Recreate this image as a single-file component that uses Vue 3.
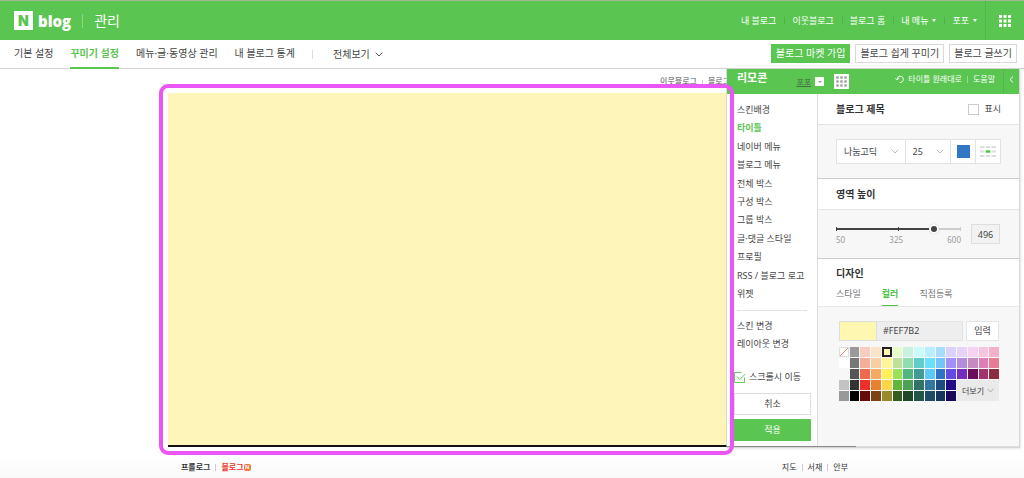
<script setup>
import { ref, computed } from 'vue'

const userLinks = [
  { label: '내 블로그' },
  { label: '이웃블로그' },
  { label: '블로그 홈' },
  { label: '내 메뉴', menu: true },
  { label: '포포', menu: true },
]
const tabs = ['기본 설정', '꾸미기 설정', '메뉴·글·동영상 관리', '내 블로그 통계']
const activeTab = '꾸미기 설정'
const sections = [
  '스킨배경', '타이틀', '네이버 메뉴', '블로그 메뉴', '전체 박스', '구성 박스',
  '그룹 박스', '글·댓글 스타일', '프로필', 'RSS / 블로그 로고', '위젯',
]
const designTabs = ['스타일', '컬러', '직접등록']
const palette = [
  'none', '#999999', '#f8cdc0', '#fae3c9', '#fef7b2', '#e6fccb', '#c9f1dd', '#c8fbfa', '#b8eefd', '#a8dcfc', '#dad2fa', '#e7d3fa', '#f7d2f2', '#f7c4e0', '#f5b1cb',
  '#ffffff', '#777777', '#f4ae99', '#f8cfa3', '#fef49a', '#bfe09a', '#90deb0', '#5fcdc9', '#6adffc', '#74c4fc', '#a28ff8', '#b48cdc', '#c48bc0', '#dd7eb6', '#e67b94',
  '#f7f7f7', '#555555', '#f06850', '#f4aa5f', '#fef05a', '#9ae256', '#51b57e', '#439a92', '#5bc9fc', '#2f72c6', '#6349e0', '#772cc0', '#6a0d5f', '#a2336f', '#8f2c40',
  '#c2c2c2', '#333333', '#ee302a', '#e8812e', '#fad648', '#5fb839', '#4aa157', '#2f7466', '#3277a2', '#1d4c80', '#200a87',
  '#999999', '#000000', '#650b09', '#7e4212', '#988a2a', '#325c20', '#1d4a26', '#22544a', '#1d4b68', '#15375d', '#1a0858',
]

const color = ref('#FEF7B2')
const areaHeight = ref(496)
const showTitle = ref(false)
const followScroll = ref(true)
const fillPercent = computed(() => ((areaHeight.value - 50) / 550) * 100 + '%')
function pick(c) {
  if (c !== 'none') color.value = c.toUpperCase()
}
</script>

<template>
  <div class="page">
    <header class="top">
      <a href="#" class="logo"><span class="mark">N</span><span class="word">blog</span></a>
      <span class="admin">관리</span>
      <nav class="user">
        <a v-for="l in userLinks" :key="l.label" href="#">{{ l.label }}<i v-if="l.menu" class="caret"></i></a>
      </nav>
      <button class="apps" aria-label="전체 서비스">
        <svg width="12" height="12" viewBox="0 0 12 12" fill="#fff">
          <template v-for="r in 3" :key="r">
            <rect v-for="c in 3" :key="c" :x="(c - 1) * 4.5" :y="(r - 1) * 4.5" width="3" height="3" />
          </template>
        </svg>
      </button>
    </header>

    <div class="bar">
      <nav class="tabs">
        <a v-for="t in tabs" :key="t" href="#" :class="{ on: t === activeTab }">{{ t }}</a>
      </nav>
      <button class="all">전체보기
        <svg width="8" height="5" viewBox="0 0 8 5" fill="none" stroke="#555"><path d="M.7.7 4 4 7.3.7" /></svg>
      </button>
      <div class="actions">
        <button class="primary">블로그 마켓 가입</button>
        <button>블로그 쉽게 꾸미기</button>
        <button>블로그 글쓰기</button>
      </div>
    </div>

    <main class="stage">
      <div class="blog">
        <div class="links"><a href="#">이웃블로그</a><a href="#">블로그</a></div>
        <div class="title-area"></div>
        <div class="menu">
          <div class="group bold"><a href="#">프롤로그</a><a href="#" class="red">블로그<span class="new">N</span></a></div>
          <div class="group"><a href="#">지도</a><a href="#">서재</a><a href="#">안부</a></div>
        </div>
        <div class="highlight"></div>
      </div>

      <aside class="remote">
        <div class="remote-head">
          <h2>리모콘</h2>
          <a href="#" class="owner">포포</a>
          <button class="drop" aria-label="블로그 선택"><i class="caret"></i></button>
          <button class="dots" aria-label="격자 보기">
            <svg width="11" height="11" viewBox="0 0 11 11" fill="#9aa09a">
              <template v-for="r in 3" :key="r">
                <rect v-for="c in 3" :key="c" :x="(c - 1) * 4 + 0.3" :y="(r - 1) * 4 + 0.3" width="2.4" height="2.4" />
              </template>
            </svg>
          </button>
          <a href="#" class="reset">
            <svg width="9" height="9" viewBox="0 0 9 9" fill="none" stroke="#fff"><path d="M.5 3.2 2.2 5 4 3.2M2.2 4.8C2.2 2.5 3.4 1.2 5.1 1.2 7 1.2 8.3 2.5 8.3 4.3 8.3 6.2 7 7.5 4.8 7.5" /></svg>
            타이틀 원래대로</a>
          <a href="#" class="help">도움말</a>
          <button class="fold" aria-label="접기">
            <svg width="5" height="7" viewBox="0 0 5 7" fill="none" stroke="#fff"><path d="M4 .6 1 3.5 4 6.4" /></svg>
          </button>
        </div>

        <div class="remote-body">
          <div class="side">
            <ul class="sections">
              <li v-for="s in sections" :key="s"><a href="#" :class="{ on: s === '타이틀' }">{{ s }}</a></li>
            </ul>
            <ul class="changes">
              <li><a href="#">스킨 변경</a></li>
              <li><a href="#">레이아웃 변경</a></li>
            </ul>
            <label class="follow"><input v-model="followScroll" type="checkbox" />
              <svg width="12" height="11" viewBox="0 0 12 11" fill="none" stroke="#62cc58"><path d="M10.5 5.5v5H.5V.5h7" /><path v-if="followScroll" d="M3 4.5 5.8 7.5 11.4 1.8" /></svg>
              스크롤시 이동</label>
            <button class="cancel">취소</button>
            <button class="apply">적용</button>
          </div>

          <div class="props">
            <div class="row">
              <h3>블로그 제목</h3>
              <label class="show"><input v-model="showTitle" type="checkbox" />표시</label>
            </div>
            <div class="box font-box">
              <div class="fonts">
                <select aria-label="글꼴" class="face"><option>나눔고딕</option></select>
                <select aria-label="글자 크기" class="size"><option>25</option></select>
                <button aria-label="글자 색"><span class="chip"></span></button>
                <button aria-label="정렬">
                  <svg width="16" height="11" viewBox="0 0 16 11">
                    <path fill="#ddd" d="M0 0h4.500v2H0zM5.700 0h4.600v2H5.700zM11.500 0H16v2h-4.500zM0 4.500h4.500v2H0zM11.500 4.500H16v2h-4.500zM0 9h4.500v2H0zM5.700 9h4.600v2H5.700zM11.500 9H16v2h-4.500z" />
                    <path fill="#4dc242" d="M5.700 4.300h4.600v2.400H5.700z" />
                  </svg>
                </button>
              </div>
            </div>

            <div class="row"><h3>영역 높이</h3></div>
            <div class="box height-box">
              <div class="slider">
                <div class="track">
                  <i class="fill" :style="{ width: fillPercent }"></i>
                  <span class="ticks"><i></i><i></i><i></i></span>
                  <input v-model.number="areaHeight" type="range" min="50" max="600" aria-label="영역 높이" />
                </div>
                <div class="scale"><span>50</span><span>325</span><span>600</span></div>
              </div>
              <input v-model.number="areaHeight" class="value" aria-label="높이 값" />
            </div>

            <div class="design">
              <h3>디자인</h3>
              <div class="design-tabs">
                <button v-for="t in designTabs" :key="t" :class="{ on: t === '컬러' }">{{ t }}</button>
              </div>
            </div>
            <div class="box color-box">
              <div class="entry">
                <span class="swatch" :style="{ background: color }"></span>
                <input v-model="color" aria-label="색상 코드" />
                <button>입력</button>
              </div>
              <div class="palette">
                <button
                  v-for="(c, i) in palette"
                  :key="i"
                  :aria-label="c"
                  :class="{ picked: c.toUpperCase() === color, first: i === 56 }"
                  :style="{ backgroundColor: c === 'none' ? '#fff' : c }"
                  @click="pick(c)"
                >
                  <svg v-if="c === 'none'" width="10" height="10" viewBox="0 0 10 10" fill="none"><path stroke="#ddd" d="M.5.5h9v9h-9z" /><path stroke="#f07c78" d="M1 9 9 1" /></svg>
                </button>
                <button class="more">더보기
                  <svg width="7" height="5" viewBox="0 0 7 5" fill="none" stroke="#aaa"><path d="M.5.700 3.500 4 6.500.700" /></svg>
                </button>
              </div>
            </div>
          </div>
        </div>
      </aside>
    </main>
  </div>
</template>

<style>
body { margin: 0; }
</style>

<style scoped>
.page {
  --green: #5ac551;
  min-height: 100vh;
  display: flex;
  flex-direction: column;
  overflow: hidden;
  font: 9px/14px "Noto Sans", "Noto Sans CJK KR", sans-serif;
  color: #444;
  background: #fff;
}
.page * { box-sizing: border-box; }
a { color: inherit; text-decoration: none; white-space: nowrap; }
button, input, select { font: inherit; color: inherit; margin: 0; padding: 0; border: 0; border-radius: 0; background: none; }
button { white-space: nowrap; cursor: pointer; }
h2, h3, ul { margin: 0; padding: 0; list-style: none; }
svg { display: block; flex: none; }
.caret { display: inline-block; border: 3px solid transparent; border-top-color: currentColor; border-bottom: 0; }

.top { display: flex; align-items: center; height: 40px; padding-left: 14px; background: var(--green); border-top: 1px solid #a3b697; color: #fff; }
.logo { display: flex; align-items: center; gap: 5px; }
.mark { width: 19px; height: 19px; background: #fff; color: var(--green); font: 900 14px/19px Inter, sans-serif; text-align: center; }
.word { font: 800 15px/20px "Open Sans", sans-serif; }
.admin { margin-left: 11px; padding-left: 11px; border-left: 1px solid #8dd886; font-size: 14px; line-height: 14px; }
.user { display: flex; margin-left: auto; }
.user a { display: flex; align-items: center; gap: 4px; padding: 0 8px; }
.user .caret { border-width: 2px; border-top-width: 3px; border-bottom: 0; }
.user a + a { background: linear-gradient(#4cb344, #4cb344) 0 50% / 1px 7px no-repeat; }
.apps { display: flex; align-items: center; justify-content: center; width: 39px; height: 39px; border-left: 1px solid #4fb747; }

.bar { display: flex; align-items: center; height: 29px; padding: 0 7px 0 14px; border-bottom: 1px solid #d4d4d4; font-size: 10px; color: #444; }
.tabs { display: flex; align-self: stretch; gap: 17px; }
.tabs a { line-height: 27px; height: 29px; }
.tabs .on { color: var(--green); font-weight: 700; border-bottom: 2px solid var(--green); }
.all { display: flex; align-items: center; gap: 5px; margin-left: 17px; padding-left: 20px; line-height: 9px; border-left: 1px solid #ddd; }
.actions { display: flex; gap: 5px; margin: 0 0 2px auto; }
.actions button { height: 19px; padding: 0 4px; border: 1px solid #d9d9d9; line-height: 17px; }
.actions .primary { background: var(--green); border-color: var(--green); color: #fff; }

.stage { position: relative; flex: 1; background: linear-gradient(#fff 95%, #f9f9f9); }
.blog { position: relative; max-width: 688px; margin: 0 auto; font-size: 8px; }
.links { display: flex; justify-content: flex-end; height: 24px; padding: 5px 126px 0 0; color: #555; }
.title-area { height: 354px; background: #fdf5ba; border-bottom: 2px solid #111; }
.links a + a, .group a + a { margin-left: 5px; padding-left: 6px; background: linear-gradient(#ccc, #ccc) 0 50% / 1px 7px no-repeat; }
.menu { display: flex; justify-content: space-between; padding: 13px 8px 0 13px; }
.group { display: flex; color: #333; }
.bold { font-weight: 700; }
.group .red { display: flex; align-items: center; color: #f0382f; }
.new { width: 7px; height: 7px; border-radius: 2px; background: #ee7a3b; color: #fff; font: 700 6px/7px "Liberation Sans", sans-serif; text-align: center; }
.highlight { position: absolute; z-index: 3; top: 15px; left: -9px; right: 122px; height: 371px; border: 4px solid #ec55f5; border-radius: 9px; pointer-events: none; }

.remote { position: absolute; z-index: 2; top: 0; right: 4px; width: 294px; border: 1px solid rgba(205, 205, 205, 0.65); border-top: 0; border-bottom-width: 2px; background: #fff; background-clip: padding-box; box-shadow: 1px 1px 2px rgba(0, 0, 0, 0.1); }
.remote-head { display: flex; align-items: center; height: 25px; padding-left: 10px; background: var(--green); color: #fff; font-size: 8px; }
.remote-head h2 { align-self: flex-start; margin-right: auto; font-size: 11px; line-height: 18px; }
.owner { margin-right: 4px; color: #4a6b4a; text-decoration: underline; }
.drop { display: flex; align-items: center; justify-content: center; width: 9px; height: 9px; background: #fff; color: #999; }
.drop .caret { border-width: 2px; border-bottom: 0; }
.dots { display: flex; align-items: center; justify-content: center; width: 15px; height: 15px; margin: 0 46px 0 10px; background: #fff; }
.reset { display: flex; align-items: center; gap: 4px; margin-bottom: 5px; }
.help { margin: 0 8px 5px 5px; padding-left: 6px; background: linear-gradient(#9bdc95, #9bdc95) 0 50% / 1px 7px no-repeat; }
.fold { display: flex; align-items: center; justify-content: center; align-self: stretch; width: 16px; padding-bottom: 5px; border-left: 1px solid #50b848; }

.remote-body { display: flex; }
.side { display: flex; flex-direction: column; flex: none; width: 91px; padding: 9px 6px 4px 7px; border-right: 1px solid #ddd; }
.sections { display: flex; flex-direction: column; justify-content: space-between; height: 208px; margin: 0 4px 0 3px; padding-bottom: 9px; border-bottom: 1px solid #e2e2e2; }
.sections li { white-space: nowrap; }
.sections .on { color: var(--green); font-weight: 700; }
.changes { display: grid; gap: 4px; margin: 8px 0 0 3px; }
.follow { display: flex; align-items: center; gap: 3px; margin: 19px 0 9px; white-space: nowrap; position: relative; }
.follow input { position: absolute; opacity: 0; width: 12px; height: 12px; }
.cancel, .apply { height: 22px; line-height: 20px; }
.cancel { border: 1px solid #ddd; }
.apply { margin-top: 4px; background: var(--green); color: #fff; }

.props { flex: 1; min-width: 0; background: #f7f7f7; }
.row { display: flex; align-items: center; justify-content: space-between; height: 31px; padding: 0 18px; background: #fff; border-bottom: 1px solid #e4e4e4; }
h3 { font-size: 10px; line-height: 14px; color: #333; }
.show { display: flex; align-items: center; gap: 5px; }
.show input { appearance: none; width: 11px; height: 11px; border: 1px solid #ccc; background: #fff; }
.box { padding: 0 18px; }
.font-box { padding-top: 14px; padding-bottom: 14px; border-bottom: 1px solid #ccc; }
.fonts { display: flex; height: 25px; border: 1px solid #e2e2e2; background: #fff; }
.fonts select {
  appearance: none;
  min-width: 0;
  padding-left: 7px;
  background: url("data:image/svg+xml,%3Csvg xmlns='http://www.w3.org/2000/svg' width='8' height='5' fill='none' stroke='%23bbb'%3E%3Cpath d='M.7.7 4 4 7.3.7'/%3E%3C/svg%3E") right 6px center no-repeat;
}
.fonts .face { flex: 71; }
.fonts .size { flex: 44; }
.fonts button { display: flex; align-items: center; justify-content: center; flex: none; width: 25px; }
.fonts > * + * { border-left: 1px solid #e2e2e2; }
.chip { width: 13px; height: 13px; background: #3277c6; }

.height-box { display: flex; justify-content: space-between; gap: 10px; height: 49px; padding-top: 14px; padding-right: 19px; border-bottom: 1px solid #ccc; }
.slider { flex: 1; min-width: 0; }
.track { position: relative; height: 10px; background: linear-gradient(#ccc, #ccc) 0 50% / 100% 2px no-repeat; }
.fill { position: absolute; left: 0; top: 4px; height: 2px; background: #444; }
.ticks { position: absolute; inset: 3px 0; display: flex; justify-content: space-between; }
.ticks i { width: 1px; background: #444; }
.ticks i:last-child { background: #ccc; }
.track input { position: absolute; inset: 0; width: 100%; height: 10px; appearance: none; }
.track input::-webkit-slider-thumb { appearance: none; width: 10px; height: 10px; border: 2px solid #fff; border-radius: 50%; background: #444; box-shadow: 0 0 1px #aaa; }
.scale { display: flex; justify-content: space-between; color: #999; font-size: 8px; line-height: 12px; }
.value { width: 29px; height: 20px; border: 1px solid #ddd; background: #f2f2f2; text-align: center; }

.design { padding: 7px 18px 0; background: #fff; border-bottom: 1px solid #e8e8e8; }
.design-tabs { display: flex; gap: 21px; margin-top: 6px; color: #777; }
.design-tabs button { height: 20px; line-height: 14px; padding-bottom: 4px; }
.design-tabs .on { color: #4dc242; font-weight: 700; border-bottom: 1px solid #4dc242; padding-bottom: 3px; }

.color-box { padding: 14px 20px 45px 21px; }
.entry { display: flex; height: 20px; margin-bottom: 6px; }
.swatch { width: 38px; border: 1px solid #ddd; }
.entry input { flex: 1; min-width: 0; padding-left: 6px; background: #eee; border: 1px solid #e2e2e2; border-left: 0; }
.entry button { width: 33px; margin-left: 3px; border: 1px solid #e4e4e4; background: #fff; }
.palette { display: grid; grid-template-columns: repeat(15, minmax(0, 1fr)); grid-auto-rows: 10px; gap: 1px; }
.palette .picked { border: 2px solid #222; }
.palette .first { grid-column-start: 1; }
.palette .more { grid-area: 4 / 12 / 6 / 16; display: flex; align-items: center; justify-content: center; gap: 3px; background: #eaeaea; font-size: 8px; }
</style>
